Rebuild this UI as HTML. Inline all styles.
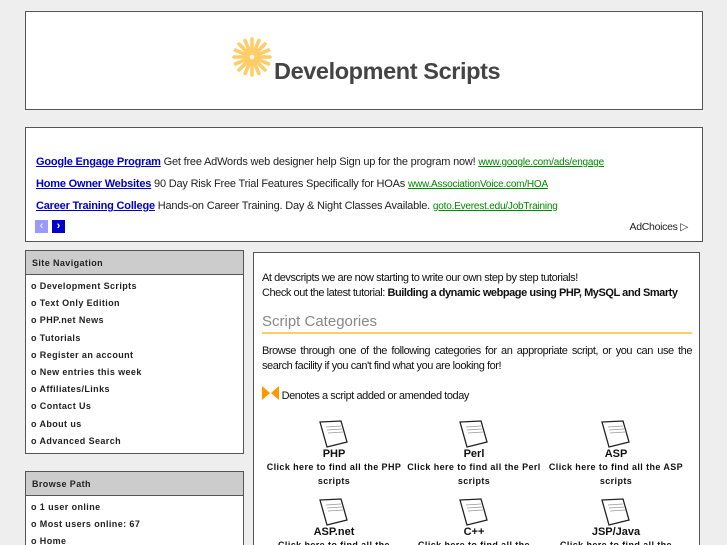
<!DOCTYPE html>
<html style="width:727px;height:545px;overflow:hidden"><head><style>
*{margin:0;padding:0;box-sizing:border-box}
body{width:727px;height:545px;overflow:hidden;background:#eee;font-family:"Liberation Sans",sans-serif;position:relative}
.box{position:absolute;background:#fff;border:1px solid #555}
.hdr{left:25px;top:11px;width:678px;height:99px}
.ad{left:25px;top:127px;width:678px;height:115px;font-size:11px;color:#222}
.ad .l{position:absolute;left:10px;letter-spacing:-0.2px;top:0}
.ad a{color:#00c;font-weight:bold;text-decoration:underline}
.ad .g{color:#080;font-size:10px;text-decoration:underline;font-weight:normal}
.side{left:25px;width:219px;font-size:9px;font-weight:bold;color:#222;letter-spacing:0.4px}
.side .h{background:#ccc;border-bottom:1px solid #555;height:24px;line-height:24px;padding-left:6px}
.side .i{height:17.2px;line-height:17.2px;padding-left:5px}
.main{left:253px;top:252px;width:447px;height:300px;font-size:11px;color:#111;letter-spacing:-0.45px}
.cat{position:absolute;width:140px;text-align:center;font-size:9px;font-weight:bold;line-height:14px;letter-spacing:0.4px}
.cat b{display:block;font-size:11px;letter-spacing:0;line-height:12px}
.cat svg{display:block;margin:0 auto}
</style></head><body>
<div class="box hdr">
<svg style="position:absolute;left:205px;top:24px" width="42" height="42" viewBox="-21 -21 42 42">
<g stroke="#fc6" stroke-width="3.5" stroke-linecap="round">
<line x1="0" y1="-4" x2="0" y2="-18"/><line x1="0" y1="4" x2="0" y2="18"/>
<line x1="-4" y1="0" x2="-18" y2="0"/><line x1="4" y1="0" x2="18" y2="0"/>
<line x1="3" y1="-3" x2="13" y2="-13"/><line x1="-3" y1="3" x2="-13" y2="13"/>
<line x1="-3" y1="-3" x2="-13" y2="-13"/><line x1="3" y1="3" x2="13" y2="13"/>
<line x1="1.5" y1="-3.7" x2="6.9" y2="-16.6"/><line x1="-1.5" y1="3.7" x2="-6.9" y2="16.6"/>
<line x1="-1.5" y1="-3.7" x2="-6.9" y2="-16.6"/><line x1="1.5" y1="3.7" x2="6.9" y2="16.6"/>
<line x1="3.7" y1="-1.5" x2="16.6" y2="-6.9"/><line x1="-3.7" y1="1.5" x2="-16.6" y2="6.9"/>
<line x1="-3.7" y1="-1.5" x2="-16.6" y2="-6.9"/><line x1="3.7" y1="1.5" x2="16.6" y2="6.9"/>
</g></svg>
<div style="position:absolute;left:248px;top:46px;font-size:23.5px;font-weight:bold;color:#444;letter-spacing:-0.4px">Development Scripts</div>
</div>
<div class="box ad">
<div class="l" style="top:28px"><a>Google Engage Program</a> Get free AdWords web designer help Sign up for the program now! <span class="g">www.google.com/ads/engage</span></div>
<div class="l" style="top:50px"><a>Home Owner Websites</a> 90 Day Risk Free Trial Features Specifically for HOAs <span class="g">www.AssociationVoice.com/HOA</span></div>
<div class="l" style="top:72px"><a>Career Training College</a> Hands-on Career Training. Day &amp; Night Classes Available. <span class="g">goto.Everest.edu/JobTraining</span></div>
<div style="position:absolute;left:9px;top:92px;width:13px;height:13px;background:#99f;color:#fff;font-size:11px;text-align:center;line-height:13px">‹</div>
<div style="position:absolute;left:26px;top:92px;width:13px;height:13px;background:#00c;color:#fff;font-size:11px;font-weight:bold;text-align:center;line-height:13px">›</div>
<div style="position:absolute;right:14px;top:93px;font-size:10.5px;letter-spacing:-0.3px">AdChoices ▷</div>
</div>
<div class="box side" style="top:250px;height:204px">
<div class="h">Site Navigation</div>
<div style="padding-top:3px">
<div class="i">o Development Scripts</div><div class="i">o Text Only Edition</div><div class="i">o PHP.net News</div><div class="i">o Tutorials</div><div class="i">o Register an account</div><div class="i">o New entries this week</div><div class="i">o Affiliates/Links</div><div class="i">o Contact Us</div><div class="i">o About us</div><div class="i">o Advanced Search</div>
</div></div>
<div class="box side" style="top:471px;height:100px">
<div class="h">Browse Path</div>
<div style="padding-top:3px"><div class="i">o 1 user online</div><div class="i">o Most users online: 67</div><div class="i">o Home</div></div>
</div>
<div class="box main">
<div style="position:absolute;left:8px;top:18px;line-height:15px;white-space:nowrap">At devscripts we are now starting to write our own step by step tutorials!<br>Check out the latest tutorial: <b>Building a dynamic webpage using PHP, MySQL and Smarty</b></div>
<div style="position:absolute;left:8px;top:60px;width:430px;font-size:15px;color:#888;border-bottom:2px solid #fc6;padding-bottom:2px;letter-spacing:0">Script Categories</div>
<div style="position:absolute;left:8px;top:91px;width:430px;line-height:15px;text-align:justify">Browse through one of the following categories for an appropriate script, or you can use the search facility if you can't find what you are looking for!</div>
<div style="position:absolute;left:8px;top:133px"><svg width="17" height="14" style="vertical-align:-1px"><path d="M0 0L8 7L0 14Z M17 0L9 7L17 14Z" fill="#f90"/></svg> Denotes a script added or amended today</div>
<div class="cat" style="left:10px;top:167px"><svg width="30" height="28" viewBox="0 0 30 28"><path d="M1 2L22 1L28 22L8 27Z" fill="#fff" stroke="#222" stroke-width="1.3"/><path d="M7 7L22 6M8 10L23 9M9 13L24 12" stroke="#999" stroke-width="0.8"/></svg><b>PHP</b>Click here to find all the PHP scripts</div>
<div class="cat" style="left:150px;top:167px"><svg width="30" height="28" viewBox="0 0 30 28"><path d="M1 2L22 1L28 22L8 27Z" fill="#fff" stroke="#222" stroke-width="1.3"/><path d="M7 7L22 6M8 10L23 9M9 13L24 12" stroke="#999" stroke-width="0.8"/></svg><b>Perl</b>Click here to find all the Perl scripts</div>
<div class="cat" style="left:292px;top:167px"><svg width="30" height="28" viewBox="0 0 30 28"><path d="M1 2L22 1L28 22L8 27Z" fill="#fff" stroke="#222" stroke-width="1.3"/><path d="M7 7L22 6M8 10L23 9M9 13L24 12" stroke="#999" stroke-width="0.8"/></svg><b>ASP</b>Click here to find all the ASP scripts</div>
<div class="cat" style="left:10px;top:245px"><svg width="30" height="28" viewBox="0 0 30 28"><path d="M1 2L22 1L28 22L8 27Z" fill="#fff" stroke="#222" stroke-width="1.3"/><path d="M7 7L22 6M8 10L23 9M9 13L24 12" stroke="#999" stroke-width="0.8"/></svg><b>ASP.net</b>Click here to find all the</div>
<div class="cat" style="left:150px;top:245px"><svg width="30" height="28" viewBox="0 0 30 28"><path d="M1 2L22 1L28 22L8 27Z" fill="#fff" stroke="#222" stroke-width="1.3"/><path d="M7 7L22 6M8 10L23 9M9 13L24 12" stroke="#999" stroke-width="0.8"/></svg><b>C++</b>Click here to find all the</div>
<div class="cat" style="left:292px;top:245px"><svg width="30" height="28" viewBox="0 0 30 28"><path d="M1 2L22 1L28 22L8 27Z" fill="#fff" stroke="#222" stroke-width="1.3"/><path d="M7 7L22 6M8 10L23 9M9 13L24 12" stroke="#999" stroke-width="0.8"/></svg><b>JSP/Java</b>Click here to find all the</div>
</div>
</body></html>
